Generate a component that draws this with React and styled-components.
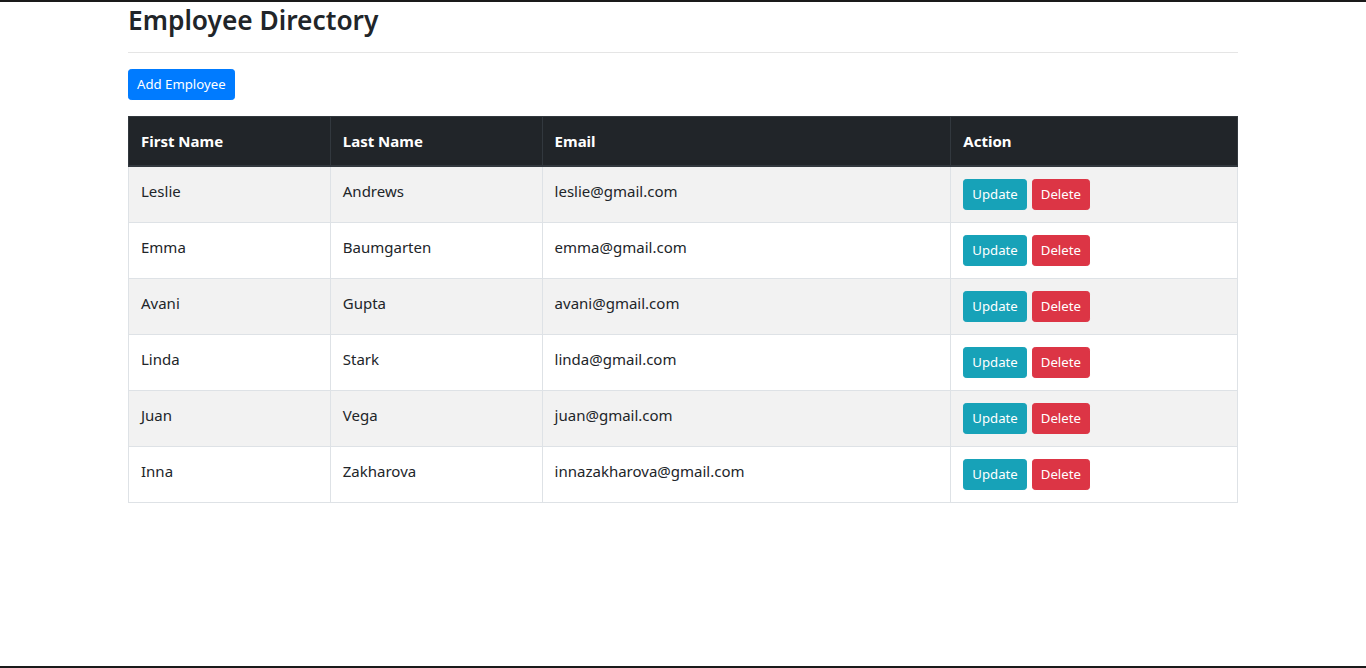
import React from "react";
import styled, { createGlobalStyle } from "styled-components";

const GlobalStyle = createGlobalStyle`
  * { box-sizing: border-box; }
  html, body { margin: 0; padding: 0; background: #fff; }
  body {
    font-family: "Noto Sans", "Open Sans", "Liberation Sans", sans-serif;
    font-size: 15px;
    line-height: 24px;
    color: #212529;
  }
`;

const Frame = styled.div`
  min-height: 668px;
  border-top: 2px solid #1a1a1a;
  border-bottom: 2px solid #1a1a1a;
`;

const Container = styled.div`
  width: 1140px;
  margin: 0 auto;
  padding: 0 15px;
`;

const Title = styled.h3`
  margin: 0 0 8px;
  padding-top: 2px;
  height: 34px;
  font-size: 26.3px;
  font-weight: 600;
  line-height: 32px;
  color: #212529;
`;

const Rule = styled.hr`
  margin: 16px 0;
  border: 0;
  border-top: 1px solid rgba(0, 0, 0, 0.1);
`;

const Button = styled.button`
  display: inline-block;
  font-family: inherit;
  font-size: 13.2px;
  line-height: 21px;
  padding: 4px 8px;
  border-radius: 3.2px;
  border: 1px solid ${(p) => p.$bg};
  background: ${(p) => p.$bg};
  color: #fff;
  cursor: pointer;
  & + & { margin-left: 5px; }
`;

const Toolbar = styled.div`
  margin-bottom: 16px;
`;

const Table = styled.table`
  width: 100%;
  border-collapse: collapse;
  border: 1px solid #dee2e6;
`;

const Th = styled.th`
  width: ${(p) => p.$w}px;
  text-align: left;
  font-weight: 700;
  padding: 12px;
  vertical-align: bottom;
  background: #212529;
  color: #fff;
  border: 1px solid #32383e;
  border-bottom-width: 2px;
`;

const Row = styled.tr`
  background: ${(p) => (p.$striped ? "#f2f2f2" : "#fff")};
`;

const Td = styled.td`
  padding: 12px;
  vertical-align: top;
  border: 1px solid #dee2e6;
`;

const employees = [
  ["Leslie", "Andrews", "leslie@gmail.com"],
  ["Emma", "Baumgarten", "emma@gmail.com"],
  ["Avani", "Gupta", "avani@gmail.com"],
  ["Linda", "Stark", "linda@gmail.com"],
  ["Juan", "Vega", "juan@gmail.com"],
  ["Inna", "Zakharova", "innazakharova@gmail.com"],
];

export default function App() {
  return (
    <>
      <GlobalStyle />
      <Frame>
        <Container>
          <Title>Employee Directory</Title>
          <Rule />
          <Toolbar>
            <Button $bg="#007bff">Add Employee</Button>
          </Toolbar>
          <Table>
            <thead>
              <tr>
                <Th $w={202}>First Name</Th>
                <Th $w={212}>Last Name</Th>
                <Th $w={409}>Email</Th>
                <Th $w={287}>Action</Th>
              </tr>
            </thead>
            <tbody>
              {employees.map(([first, last, email], i) => (
                <Row key={email} $striped={i % 2 === 0}>
                  <Td>{first}</Td>
                  <Td>{last}</Td>
                  <Td>{email}</Td>
                  <Td>
                    <Button $bg="#17a2b8">Update</Button>
                    <Button $bg="#dc3545">Delete</Button>
                  </Td>
                </Row>
              ))}
            </tbody>
          </Table>
        </Container>
      </Frame>
    </>
  );
}
